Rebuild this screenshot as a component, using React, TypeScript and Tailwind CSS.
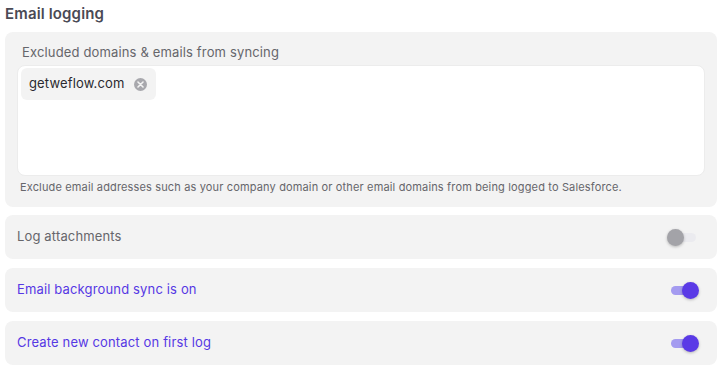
import React, { useState } from "react";

const Toggle = ({ on, onChange }: { on: boolean; onChange: () => void }) => (
  <button
    type="button"
    onClick={onChange}
    className="relative w-[32px] h-[17px] shrink-0"
    aria-pressed={on}
  >
    <span
      className={`absolute left-[4px] right-[3px] top-[4px] h-[9px] rounded-full ${
        on ? "bg-[#a49bf0]" : "bg-[#ebebef]"
      }`}
    />
    <span
      className={`absolute top-0 w-[17px] h-[17px] rounded-full shadow-[0_1px_3px_rgba(0,0,0,0.25)] ${
        on ? "right-0 bg-[#5a3ae6]" : "left-0 bg-[#a3a3a8]"
      }`}
    />
  </button>
);

const Row = ({ label, on, onChange }: { label: string; on: boolean; onChange: () => void }) => (
  <div className="flex items-center justify-between h-[44px] rounded-[8px] bg-[#f3f3f3] pl-3 pr-[18px]">
    <span className={`text-[13px] ${on ? "text-[#5638e4]" : "text-[#66666b]"}`}>{label}</span>
    <Toggle on={on} onChange={onChange} />
  </div>
);

export default function App() {
  const [attachments, setAttachments] = useState(false);
  const [bgSync, setBgSync] = useState(true);
  const [createContact, setCreateContact] = useState(true);
  const [domains, setDomains] = useState(["getweflow.com"]);

  return (
    <div className="w-[726px] h-[374px] bg-white pl-[5px] pr-[9px] pt-[3px] font-['Inter',sans-serif] tracking-[0.15px]">
      <h2 className="text-[15px] leading-[22px] font-semibold text-[#4a4a55] mb-[7px]">Email logging</h2>

      {/* excluded domains */}
      <div className="rounded-[8px] bg-[#f3f3f3] px-3 pt-[10px] pb-[12px] mb-2">
        <div className="pl-[5px] text-[13px] leading-[20px] text-[#66666b] mb-[3px]">
          Excluded domains &amp; emails from syncing
        </div>
        <div className="h-[111px] rounded-[8px] bg-white border border-[#ececec] p-[2px] pl-[3px]">
          <div className="flex flex-wrap gap-1">
            {domains.map((d) => (
              <div
                key={d}
                className="flex items-center h-[32px] rounded-[6px] bg-[#f3f3f3] pl-2 pr-[9px] gap-[10px] text-[13px] text-[#2a2a2f]"
              >
                {d}
                <button
                  type="button"
                  onClick={() => setDomains(domains.filter((x) => x !== d))}
                  className="w-[13px] h-[13px] rounded-full bg-[#a8a8ad] flex items-center justify-center"
                >
                  <svg width="7" height="7" viewBox="0 0 7 7">
                    <path d="M1 1 L6 6 M6 1 L1 6" stroke="#f3f3f3" strokeWidth="1.6" strokeLinecap="round" />
                  </svg>
                </button>
              </div>
            ))}
          </div>
        </div>
        <p className="pl-[3px] mt-[3px] text-[11px] leading-[16px] text-[#66666b]">
          Exclude email addresses such as your company domain or other email domains from being logged to Salesforce.
        </p>
      </div>

      <div className="flex flex-col gap-[9px]">
        <Row label="Log attachments" on={attachments} onChange={() => setAttachments(!attachments)} />
        <Row label="Email background sync is on" on={bgSync} onChange={() => setBgSync(!bgSync)} />
        <Row label="Create new contact on first log" on={createContact} onChange={() => setCreateContact(!createContact)} />
      </div>
    </div>
  );
}
